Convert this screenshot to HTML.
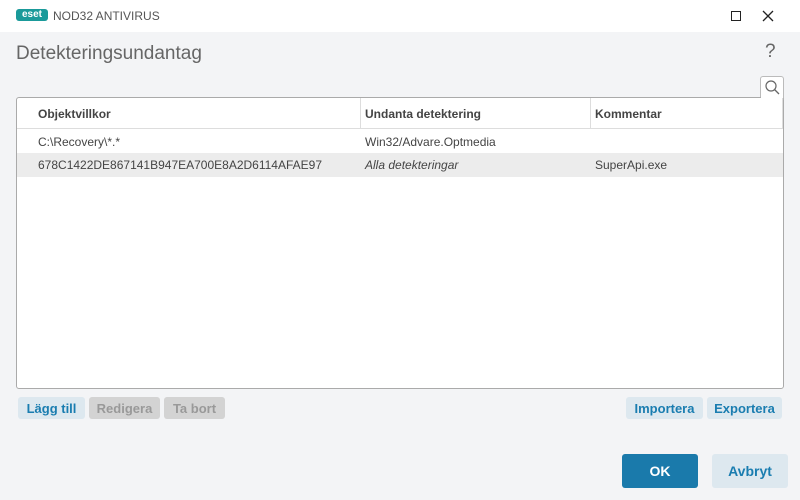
<!DOCTYPE html><html><head><style>
*{margin:0;padding:0;box-sizing:border-box}
body{width:800px;height:500px;background:#f3f4f6;font-family:"Liberation Sans",sans-serif;position:relative;overflow:hidden;color:#333}
.a{position:absolute}
.tb{left:0;top:0;width:800px;height:32px;background:#fff}
.btn{position:absolute;border-radius:3px;font-size:13px;font-weight:bold;display:flex;align-items:center;justify-content:center}
.bl{background:#dde8ef;color:#1a7db0}
.gr{background:#d3d3d3;color:#999}
.t{font-size:12px;color:#444;position:absolute}
</style></head><body>
<div class="a tb"></div>
<div class="a" style="left:16px;top:9px;width:32px;height:12px;border-radius:3px;background:#1a9a9a;color:#fff;font-size:10px;font-weight:bold;line-height:12px;text-align:center;letter-spacing:0">eset</div>
<div class="a" style="left:53px;top:9px;font-size:12px;color:#555">NOD32 ANTIVIRUS</div>
<div class="a" style="left:731px;top:11px;width:10px;height:10px;border:1.3px solid #222"></div>
<svg class="a" style="left:762px;top:10px" width="12" height="12"><path d="M1 1L11 11M11 1L1 11" stroke="#222" stroke-width="1.3"/></svg>
<div class="a" style="left:16px;top:43px;font-size:19px;color:#666">Detekteringsundantag</div>
<div class="a" style="left:765px;top:41px;font-size:19px;color:#666">?</div>
<div class="a" style="left:760px;top:76px;width:24px;height:23px;background:#fff;border:1px solid #bbb;border-bottom:none;border-radius:3px 3px 0 0"></div>
<svg class="a" style="left:764px;top:79px" width="17" height="17"><circle cx="7" cy="7" r="5" fill="none" stroke="#666" stroke-width="1.2"/><path d="M10.5 10.5L15 15" stroke="#666" stroke-width="1.3"/></svg>
<div class="a" style="left:16px;top:97px;width:768px;height:292px;background:#fff;border:1px solid #aaa;border-radius:3px"></div>
<div class="a" style="left:761px;top:97px;width:22px;height:2px;background:#fff"></div>
<div class="a" style="left:17px;top:128px;width:766px;height:1px;background:#ddd"></div>
<div class="a" style="left:360px;top:98px;width:1px;height:30px;background:#ddd"></div>
<div class="a" style="left:590px;top:98px;width:1px;height:30px;background:#ddd"></div>
<div class="a" style="left:782px;top:98px;width:1px;height:30px;background:#ddd"></div>
<div class="a" style="left:17px;top:153px;width:766px;height:24px;background:#ececec"></div>
<div class="t" style="left:38px;top:107px;font-weight:bold">Objektvillkor</div>
<div class="t" style="left:365px;top:107px;font-weight:bold">Undanta detektering</div>
<div class="t" style="left:595px;top:107px;font-weight:bold">Kommentar</div>
<div class="t" style="left:38px;top:135px">C:\Recovery\*.*</div>
<div class="t" style="left:365px;top:135px">Win32/Advare.Optmedia</div>
<div class="t" style="left:38px;top:158px">678C1422DE867141B947EA700E8A2D6114AFAE97</div>
<div class="t" style="left:365px;top:158px;font-style:italic">Alla detekteringar</div>
<div class="t" style="left:595px;top:158px">SuperApi.exe</div>
<div class="btn bl" style="left:18px;top:397px;width:67px;height:22px">Lägg till</div>
<div class="btn gr" style="left:89px;top:397px;width:71px;height:22px">Redigera</div>
<div class="btn gr" style="left:164px;top:397px;width:61px;height:22px">Ta bort</div>
<div class="btn bl" style="left:626px;top:397px;width:77px;height:22px">Importera</div>
<div class="btn bl" style="left:707px;top:397px;width:75px;height:22px">Exportera</div>
<div class="btn" style="left:622px;top:454px;width:76px;height:34px;background:#1a7aab;color:#fff;font-size:14px">OK</div>
<div class="btn bl" style="left:712px;top:454px;width:76px;height:34px;font-size:14px">Avbryt</div>
</body></html>
